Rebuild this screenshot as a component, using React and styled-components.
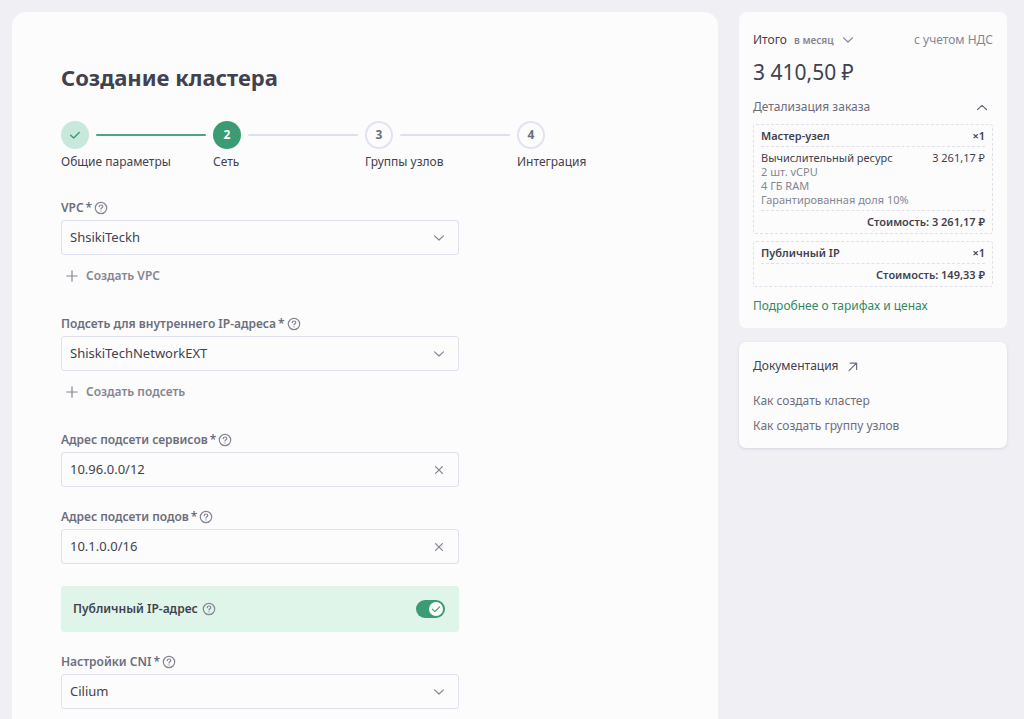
import React, { useState } from "react";
import styled, { createGlobalStyle } from "styled-components";

const GlobalStyle = createGlobalStyle`
  * {
    box-sizing: border-box;
  }
  body {
    margin: 0;
    background: #efeff4;
    color: #41424e;
    font-family: "Noto Sans", "Open Sans", sans-serif;
    font-size: 12px;
    line-height: 16px;
  }
  button, input, select {
    font: inherit;
    color: inherit;
  }
  a {
    color: inherit;
    text-decoration: none;
  }
`;

const Page = styled.div`
  display: grid;
  grid-template-columns: minmax(0, 1fr) 268px;
  align-items: start;
  gap: 21px;
  padding: 12px 17px 12px 12px;
`;

const Content = styled.main`
  background: #fcfcfd;
  border-radius: 14px;
  padding: 49px;
`;

const Title = styled.h1`
  margin: 0 0 28px;
  font-size: 22px;
  line-height: 32px;
  font-weight: 700;
`;

const Steps = styled.ol`
  display: grid;
  grid-template-columns: repeat(4, 1fr);
  list-style: none;
  margin: 0 0 30px;
  padding: 0;
`;

const StepHead = styled.div`
  display: flex;
  align-items: center;
  gap: 7px;
  margin-bottom: 5px;
  padding-right: 7px;
`;

const circleColors = {
  done: "background: #c8e8dc; color: #3b9c74;",
  active: "background: #3b9c74; color: #fff;",
  next: "border: 2px solid #e2e3f0; color: #6d6e7c;",
};

const StepCircle = styled.span`
  display: flex;
  align-items: center;
  justify-content: center;
  flex: none;
  width: 28px;
  height: 28px;
  border-radius: 50%;
  font-weight: 700;
  ${(props) => circleColors[props.$state]}
`;

const StepLine = styled.span`
  flex: 1;
  height: 2px;
  border-radius: 1px;
  background: ${(props) => (props.$done ? "#4aa680" : "#dfe0ee")};
`;

const StepLabel = styled.div`
  white-space: nowrap;
`;

const Form = styled.form`
  display: flex;
  flex-direction: column;
  gap: 22px;
  max-width: 398px;
`;

const LabelRow = styled.div`
  display: flex;
  align-items: center;
  gap: 2px;
  margin-bottom: 4px;
`;

const Label = styled.label`
  display: flex;
  gap: 2px;
  font-weight: 600;
  color: #6d6e7c;
`;

const HelpButton = styled.button`
  display: flex;
  padding: 0;
  border: none;
  background: none;
  color: #858693;
  cursor: pointer;
`;

const Control = styled.div`
  position: relative;
`;

const Input = styled.input`
  display: block;
  width: 100%;
  height: 35px;
  padding: 0 36px 1px 8px;
  border: 1px solid #dfe0ee;
  border-radius: 3px;
  background: #fcfcfd;
  font-size: 13px;
  outline: none;
  &:focus {
    border-color: #3b9c74;
  }
`;

const Select = styled(Input)`
  appearance: none;
`;

const ControlIcon = styled.span`
  position: absolute;
  top: 0;
  bottom: 0;
  right: 13px;
  display: flex;
  align-items: center;
  color: #858693;
  pointer-events: none;
`;

const ClearButton = styled.button`
  position: absolute;
  top: 0;
  bottom: 0;
  right: 13px;
  display: flex;
  align-items: center;
  padding: 0;
  border: none;
  background: none;
  color: #858693;
  cursor: pointer;
`;

const AddButton = styled.button`
  display: flex;
  align-items: center;
  gap: 7px;
  margin: 13px 0 10px;
  padding: 0 4px;
  border: none;
  background: none;
  color: #858693;
  font-weight: 600;
  cursor: pointer;
`;

const SwitchRow = styled.div`
  display: flex;
  align-items: center;
  gap: 4px;
  height: 46px;
  padding: 0 14px 0 12px;
  border-radius: 3px;
  background: #dff5ea;
`;

const SwitchLabel = styled.label`
  font-weight: 600;
`;

const Switch = styled.label`
  display: flex;
  align-items: center;
  justify-content: ${(props) => (props.$on ? "flex-end" : "flex-start")};
  width: 29px;
  height: 18px;
  margin-left: auto;
  padding: 2px;
  border-radius: 9px;
  background: ${(props) => (props.$on ? "#3b9c74" : "#b9bac6")};
  cursor: pointer;
  input {
    position: absolute;
    opacity: 0;
    margin: 0;
  }
`;

const Knob = styled.span`
  display: flex;
  align-items: center;
  justify-content: center;
  width: 14px;
  height: 14px;
  border-radius: 50%;
  background: #fff;
  color: #3b9c74;
`;

const Sidebar = styled.aside`
  display: flex;
  flex-direction: column;
  gap: 14px;
  line-height: 20px;
`;

const Card = styled.section`
  padding: 18px 14px 12px;
  border-radius: 7px;
  background: #fcfcfd;
`;

const DocsCard = styled(Card)`
  padding-top: 14px;
  box-shadow: 0 1px 3px rgba(65, 66, 110, 0.14);
`;

const TotalRow = styled.div`
  display: flex;
  align-items: center;
  justify-content: space-between;
`;

const Period = styled.button`
  display: flex;
  align-items: center;
  gap: 7px;
  padding: 0;
  border: none;
  background: none;
  cursor: pointer;
  small {
    font-size: 10px;
    font-weight: 600;
    color: #858693;
  }
  svg {
    color: #858693;
  }
`;

const Muted = styled.span`
  color: #858693;
`;

const Price = styled.div`
  margin: 8px 0 11px;
  font-size: 21px;
  line-height: 28px;
`;

const DetailsToggle = styled.button`
  display: flex;
  align-items: center;
  justify-content: space-between;
  width: 100%;
  margin-bottom: 7px;
  padding: 0 4px 0 0;
  border: none;
  background: none;
  color: #6d6e7c;
  cursor: pointer;
`;

const OrderBox = styled.div`
  margin-bottom: 7px;
  padding: 0 7px;
  border: 1px dashed #dfe0e9;
  border-radius: 3px;
  font-size: 11px;
  line-height: 14px;
`;

const OrderHead = styled.div`
  display: flex;
  align-items: center;
  justify-content: space-between;
  height: 22px;
  border-bottom: 1px dashed #dfe0e9;
  font-weight: 600;
`;

const OrderBody = styled.div`
  padding: 4px 0 3px;
  border-bottom: 1px dashed #dfe0e9;
`;

const OrderLine = styled.div`
  display: flex;
  justify-content: space-between;
`;

const OrderCost = styled.div`
  height: 22px;
  line-height: 22px;
  text-align: right;
  font-weight: 600;
`;

const PricesLink = styled.a`
  display: block;
  margin-top: 9px;
  color: #2e8a62;
`;

const DocsTitle = styled.a`
  display: flex;
  align-items: center;
  gap: 7px;
  margin-bottom: 15px;
  svg {
    color: #6d6e7c;
  }
`;

const DocsLinks = styled.nav`
  display: flex;
  flex-direction: column;
  gap: 5px;
  color: #6d6e7c;
`;

const Icon = ({ size = 14, width = 1.2, children }) => (
  <svg
    width={size}
    height={size}
    viewBox="0 0 14 14"
    fill="none"
    stroke="currentColor"
    strokeWidth={width}
    strokeLinecap="round"
    strokeLinejoin="round"
    aria-hidden="true"
  >
    {children}
  </svg>
);

const ChevronDown = () => <Icon><path d="M2.500 4.900 7 9l4.500-4.100" /></Icon>;
const ChevronUp = () => <Icon><path d="M2.500 9.500 7 5.400l4.500 4.100" /></Icon>;
const Cross = () => <Icon width={1.3}><path d="m3.600 3.600 6.800 6.800m0-6.800-6.800 6.800" /></Icon>;
const Plus = () => <Icon><path d="M7 1.800v10.400M1.800 7h10.400" /></Icon>;
const Check = ({ size }) => <Icon size={size} width={1.4}><path d="m2.700 7.200 3 2.900 5.500-5.500" /></Icon>;
const ArrowUpRight = () => <Icon><path d="m3 11.700 7.300-7.300M4.300 4.200h6.300v6.300" /></Icon>;

const Help = ({ about }) => (
  <HelpButton type="button" aria-label={about}>
    <Icon width={1.2}>
      <circle cx="7" cy="7" r="5.700" />
      <path d="M5.200 5.600c.1-1 .8-1.600 1.800-1.600s1.800.6 1.800 1.500c0 1.200-1.800 1.300-1.800 2.500M7 9.900v.1" />
    </Icon>
  </HelpButton>
);

const SelectField = ({ id, label, value, action }) => (
  <div>
    <LabelRow>
      <Label htmlFor={id}>{label} <span>*</span></Label>
      <Help about={label} />
    </LabelRow>
    <Control>
      <Select as="select" id={id} defaultValue={value}>
        <option>{value}</option>
      </Select>
      <ControlIcon><ChevronDown /></ControlIcon>
    </Control>
    {action && <AddButton type="button"><Plus />{action}</AddButton>}
  </div>
);

const TextField = ({ id, label, initial }) => {
  const [value, setValue] = useState(initial);

  return (
    <div>
      <LabelRow>
        <Label htmlFor={id}>{label} <span>*</span></Label>
        <Help about={label} />
      </LabelRow>
      <Control>
        <Input id={id} value={value} onChange={(e) => setValue(e.target.value)} />
        <ClearButton type="button" aria-label="Очистить" onClick={() => setValue("")}>
          <Cross />
        </ClearButton>
      </Control>
    </div>
  );
};

const steps = [
  { label: "Общие параметры", state: "done" },
  { label: "Сеть", state: "active" },
  { label: "Группы узлов", state: "next" },
  { label: "Интеграция", state: "next" },
];

const App = () => {
  const [publicIp, setPublicIp] = useState(true);
  const [open, setOpen] = useState(true);

  return (
    <>
      <GlobalStyle />
      <Page>
        <Content>
          <Title>Создание кластера</Title>
          <Steps>
            {steps.map((step, index) => (
              <li key={step.label}>
                <StepHead>
                  <StepCircle $state={step.state}>
                    {step.state === "done" ? <Check size={14} /> : index + 1}
                  </StepCircle>
                  {index < steps.length - 1 && <StepLine $done={step.state === "done"} />}
                </StepHead>
                <StepLabel>{step.label}</StepLabel>
              </li>
            ))}
          </Steps>
          <Form>
            <SelectField id="vpc" label="VPC" value="ShsikiTeckh" action="Создать VPC" />
            <SelectField
              id="subnet"
              label="Подсеть для внутреннего IP-адреса"
              value="ShiskiTechNetworkEXT"
              action="Создать подсеть"
            />
            <TextField id="services" label="Адрес подсети сервисов" initial="10.96.0.0/12" />
            <TextField id="pods" label="Адрес подсети подов" initial="10.1.0.0/16" />
            <SwitchRow>
              <SwitchLabel htmlFor="public-ip">Публичный IP-адрес</SwitchLabel>
              <Help about="Публичный IP-адрес" />
              <Switch $on={publicIp}>
                <input
                  id="public-ip"
                  type="checkbox"
                  checked={publicIp}
                  onChange={(e) => setPublicIp(e.target.checked)}
                />
                <Knob>{publicIp && <Check size={12} />}</Knob>
              </Switch>
            </SwitchRow>
            <SelectField id="cni" label="Настройки CNI" value="Cilium" />
          </Form>
        </Content>

        <Sidebar>
          <Card>
            <TotalRow>
              <Period type="button">
                Итого <small>в месяц</small> <ChevronDown />
              </Period>
              <Muted>с учетом НДС</Muted>
            </TotalRow>
            <Price>3 410,50 ₽</Price>
            <DetailsToggle type="button" aria-expanded={open} onClick={() => setOpen(!open)}>
              Детализация заказа
              {open ? <ChevronUp /> : <ChevronDown />}
            </DetailsToggle>
            {open && (
              <>
                <OrderBox>
                  <OrderHead><span>Мастер-узел</span><span>×1</span></OrderHead>
                  <OrderBody>
                    <OrderLine><span>Вычислительный ресурс</span><span>3 261,17 ₽</span></OrderLine>
                    <OrderLine><Muted>2 шт. vCPU</Muted></OrderLine>
                    <OrderLine><Muted>4 ГБ RAM</Muted></OrderLine>
                    <OrderLine><Muted>Гарантированная доля 10%</Muted></OrderLine>
                  </OrderBody>
                  <OrderCost>Стоимость: 3 261,17 ₽</OrderCost>
                </OrderBox>
                <OrderBox>
                  <OrderHead><span>Публичный IP</span><span>×1</span></OrderHead>
                  <OrderCost>Стоимость: 149,33 ₽</OrderCost>
                </OrderBox>
              </>
            )}
            <PricesLink href="#prices">Подробнее о тарифах и ценах</PricesLink>
          </Card>
          <DocsCard>
            <DocsTitle href="#docs">Документация <ArrowUpRight /></DocsTitle>
            <DocsLinks>
              <a href="#create-cluster">Как создать кластер</a>
              <a href="#create-group">Как создать группу узлов</a>
            </DocsLinks>
          </DocsCard>
        </Sidebar>
      </Page>
    </>
  );
};

export default App;
